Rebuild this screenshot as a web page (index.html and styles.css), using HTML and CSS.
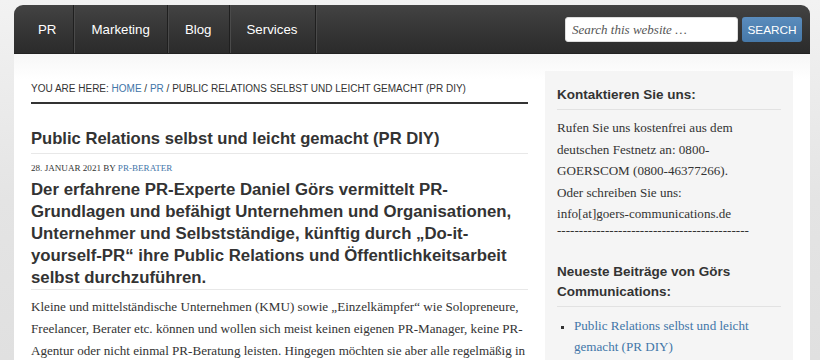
FILE: index.html
```html
<!DOCTYPE html>
<html lang="de">

<head>
    <meta charset="UTF-8" />
    <meta name="viewport" content="width=device-width, initial-scale=1.0" />
    <title>Public Relations selbst und leicht gemacht (PR DIY)</title>
    <link rel="stylesheet" href="styles.css">
</head>

<body>
    <div class="site-container">
        <nav class="nav-primary">
            <ul class="menu">
                <li class="menu-item first"><a href="#">PR</a></li>
                <li class="menu-item"><a href="#">Marketing</a></li>
                <li class="menu-item"><a href="#">Blog</a></li>
                <li class="menu-item"><a href="#">Services</a></li>
            </ul>
            <form class="search-form">
                <input class="search-input" type="search" placeholder="Search this website …" />
                <button class="search-button" type="button">SEARCH</button>
            </form>
        </nav>

        <div class="site-inner">
            <main class="content">
                <div class="breadcrumb">
                    You are here: <a href="#">Home</a> / <a href="#">PR</a> / Public Relations selbst und leicht gemacht (PR DIY)
                </div>
                <article class="entry">
                    <h1 class="entry-title">Public Relations selbst und leicht gemacht (PR DIY)</h1>
                    <p class="entry-meta">28. Januar 2021 by <a href="#">PR-Berater</a></p>
                    <div class="entry-content">
                        <h2 class="lead">Der erfahrene PR-Experte Daniel Görs vermittelt PR-Grundlagen und befähigt Unternehmen und Organisationen, Unternehmer und Selbstständige, künftig durch „Do-it-yourself-PR“ ihre Public Relations und Öffentlichkeitsarbeit selbst durchzuführen.</h2>
                        <p>Kleine und mittelständische Unternehmen (KMU) sowie „Einzelkämpfer“ wie Solopreneure, Freelancer, Berater etc. können und wollen sich meist keinen eigenen PR-Manager, keine PR-Agentur oder nicht einmal PR-Beratung leisten. Hingegen möchten sie aber alle regelmäßig in ihren Zielgruppen und in der Öffentlichkeit präsent sein und wahrgenommen werden.</p>
                    </div>
                </article>
            </main>

            <aside class="sidebar">
                <section class="widget">
                    <h4 class="widget-title">Kontaktieren Sie uns:</h4>
                    <p>Rufen Sie uns kostenfrei aus dem deutschen Festnetz an: 0800-GOERSCOM (0800-46377266).<br>Oder schreiben Sie uns:<br><span class="nowrap">info[at]goers-communications.de</span></p>
                    <div class="dashes">--------------------------------------------</div>
                </section>
                <section class="widget">
                    <h4 class="widget-title">Neueste Beiträge von Görs Communications:</h4>
                    <ul class="recent-posts">
                        <li><a href="#">Public Relations selbst und leicht gemacht (PR DIY)</a></li>
                        <li><a href="#">Pressemitteilung schreiben</a></li>
                    </ul>
                </section>
            </aside>
        </div>
    </div>
</body>

</html>
```

FILE: styles.css
```css
html,
body {
    margin: 0;
    padding: 0;
}

body {
    background: linear-gradient(to bottom, #f2f2f2 0, #e4e4e4 200px, #e0e0e0 100%);
    color: #333;
    font-family: "Liberation Serif", Georgia, serif;
    height: 360px;
    overflow: hidden;
}

a {
    color: #4275a8;
    text-decoration: none;
}

.nowrap {
    white-space: nowrap;
}

.site-container {
    width: 796px;
    margin: 5px 0 0 14px;
}

/* navigation */

.nav-primary {
    display: flex;
    justify-content: space-between;
    align-items: center;
    height: 48px;
    background: linear-gradient(to bottom, #434343 0, #363636 50%, #2b2b2b 100%);
    border-radius: 9px 9px 0 0;
    border-bottom: 1px solid #222;
}

.menu {
    display: flex;
    margin: 0;
    padding: 0;
    list-style: none;
    height: 100%;
}

.menu-item {
    display: flex;
    border-right: 1px solid #1f1f1f;
    box-shadow: 1px 0 0 #4a4a4a;
}

.menu-item a {
    display: flex;
    align-items: center;
    padding: 1px 17px 0;
    color: #fff;
    font-family: "Liberation Sans", Arial, sans-serif;
    font-size: 13.3px;
}

.menu-item.first a {
    padding-left: 24px;
}

.search-form {
    display: flex;
    gap: 4px;
    padding: 1px 8px 0 0;
}

.search-input {
    width: 173px;
    height: 25px;
    box-sizing: border-box;
    border: 1px solid #ddd;
    border-radius: 3px;
    padding: 0 6px;
    font-family: "Liberation Serif", Georgia, serif;
    font-style: italic;
    font-size: 13px;
    background: #fff;
}

.search-input::placeholder {
    color: #555;
}

.search-button {
    width: 60px;
    height: 25px;
    border: 0;
    border-radius: 3px;
    padding: 0;
    background: linear-gradient(to bottom, #5a8cbd, #4678a8);
    color: #fff;
    font-family: "Liberation Sans", Arial, sans-serif;
    font-size: 11.8px;
}

/* inner */

.site-inner {
    display: flex;
    gap: 17px;
    padding: 17px;
    background: linear-gradient(to bottom, #f7f7f7 0, #fff 25px);
    height: 300px;
}

.content {
    width: 497px;
}

.breadcrumb {
    padding: 11px 0 6px;
    border-bottom: 2px solid #333;
    font-family: "Liberation Sans", Arial, sans-serif;
    font-size: 10px;
    line-height: 14px;
    text-transform: uppercase;
    color: #333;
}

.entry-title {
    margin: 24px 0 0;
    padding-bottom: 3px;
    border-bottom: 1px solid #e8e8e8;
    font-family: "Liberation Sans", Arial, sans-serif;
    font-size: 16.6px;
    line-height: 22px;
    color: #333;
}

.entry-meta {
    margin: 8px 0 0;
    font-size: 9.1px;
    line-height: 12px;
    text-transform: uppercase;
}

.lead {
    margin: 5px 0 0;
    padding-bottom: 0;
    border-bottom: 1px solid #e8e8e8;
    font-family: "Liberation Sans", Arial, sans-serif;
    font-size: 16.8px;
    line-height: 22px;
    color: #333;
}

.entry-content p {
    margin: 6px 0 0;
    font-size: 13.1px;
    line-height: 22px;
}

/* sidebar */

.sidebar {
    width: 248px;
    box-sizing: border-box;
    padding: 0 12px;
    background: #f5f5f5;
}

.widget-title {
    margin: 14px 0 0;
    padding-bottom: 4px;
    border-bottom: 1px solid #e2e2e2;
    font-family: "Liberation Sans", Arial, sans-serif;
    font-size: 13.5px;
    line-height: 20px;
    color: #333;
}

.widget p {
    margin: 7px 0 0;
    font-size: 13.1px;
    line-height: 21.5px;
}

.dashes {
    font-size: 13.1px;
    line-height: 10px;
    margin-bottom: 27px;
}

.recent-posts {
    margin: 8px 0 0;
    padding-left: 17px;
    list-style: square;
    font-size: 13.1px;
    line-height: 21px;
}

.recent-posts li::marker {
    color: #333;
    font-size: 11px;
}
```
